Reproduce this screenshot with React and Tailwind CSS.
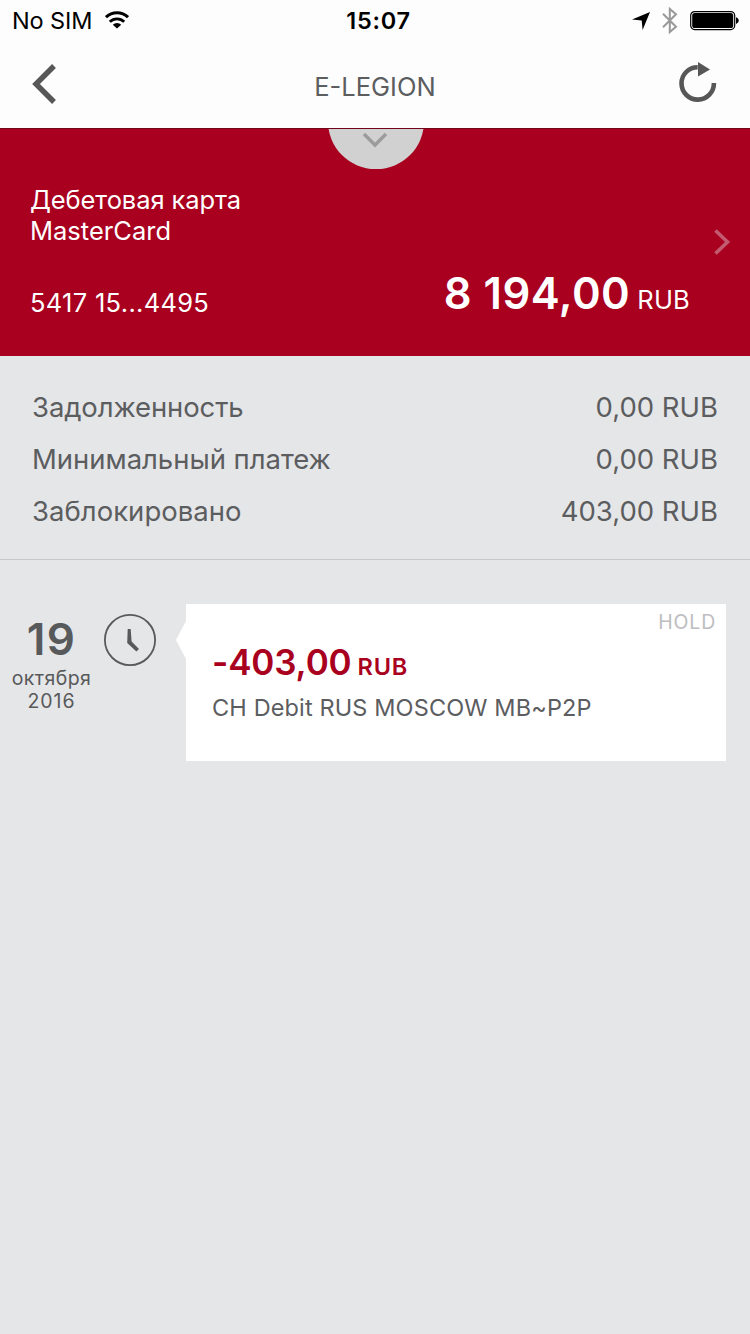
const DETAILS = [
  { label: "Задолженность", value: "0,00 RUB", spacing: "tracking-[-0.11px]" },
  { label: "Минимальный платеж", value: "0,00 RUB", spacing: "tracking-[-0.03px]" },
  { label: "Заблокировано", value: "403,00 RUB", spacing: "tracking-[0.03px]" },
];

const TRANSACTIONS = [
  {
    day: "19",
    month: "октября",
    year: "2016",
    amount: "-403,00",
    currency: "RUB",
    desc: "CH Debit RUS MOSCOW MB~P2P",
    status: "HOLD",
  },
];

function StatusBar() {
  return (
    <div className="grid h-10 grid-cols-3 items-center pl-3 pr-[11px] text-[23.5px] leading-[38px] text-black">
      <div className="flex items-center gap-[13px]">
        <span className="pt-[2px] tracking-[-0.1px]">No SIM</span>
        <svg width="24" height="18" viewBox="0 0 24 18" fill="none" stroke="#000">
          <path d="M1 6.2a15.6 15.6 0 0 1 22 0" strokeWidth="3" />
          <path d="M4.8 10.8a10.2 10.2 0 0 1 14.4 0" strokeWidth="2.8" />
          <path d="M12 17.6 7.8 13.8a5.7 5.7 0 0 1 8.4 0z" fill="#000" stroke="none" />
        </svg>
      </div>
      <span className="pl-[6px] pt-[2px] text-center font-semibold tracking-[0.7px]">15:07</span>
      <div className="flex items-center justify-end pt-[2px]">
        <svg width="18" height="18" viewBox="0 0 18 18" className="mr-[12px]">
          <path d="M18 0 10.6 18 9.7 8.4 0 7.6z" fill="#000" />
        </svg>
        <svg width="16" height="28" viewBox="0 0 16 28" className="mr-[12px]" fill="none" stroke="#999" strokeWidth="2">
          <path d="M1 6.700 14 19.800 7.800 25.100V1.900L14 7.200 1 20.300" />
        </svg>
        <svg width="49" height="20" viewBox="0 0 49 20">
          <rect x="0.7" y="0.6" width="44" height="18" rx="4" fill="none" stroke="#000" strokeWidth="1.2" />
          <rect x="2.2" y="2.1" width="41" height="15" rx="2.6" fill="#000" />
          <path d="M46 6.300c1.600.400 2.700 1.700 2.700 3.300S47.600 12.500 46 12.900z" fill="#000" />
        </svg>
      </div>
    </div>
  );
}

function Header() {
  return (
    <div className="grid h-[88px] grid-cols-[1fr_auto_1fr] items-center pl-[33px] pr-[33px]">
      <svg width="26" height="40" viewBox="0 0 26 40" className="-ml-px" fill="none" stroke="#575757" strokeWidth="5.4">
        <path d="M22 2 4 20l18 18" />
      </svg>
      <h1 className="pt-[5px] text-[25.5px] leading-[31px] text-[#5c5d5f]">E-LEGION</h1>
      <svg width="38" height="40" viewBox="0 0 38 40" className="mb-1 justify-self-end">
        <path d="M18.7 5.2A16.2 16.2 0 1 0 34.9 21" fill="none" stroke="#575757" strokeWidth="4.6" />
        <path d="M19 0v14.5L31 7.4z" fill="#575757" />
      </svg>
    </div>
  );
}

function AccountCard() {
  return (
    <div className="relative h-[228px] overflow-hidden border-t border-[#72051b] bg-[#a90020] pl-[30px] pr-[60px] pt-[55px] text-[25.5px] leading-[31px] text-white">
      {/* Pull-down tab */}
      <div className="absolute -top-[55px] left-[328px] flex h-[95px] w-[96px] justify-center rounded-full bg-[#d1d1d1]">
        <svg width="26" height="16" viewBox="0 0 26 16" className="mr-[2px] mt-[58px]" fill="none" stroke="#9c9c9c" strokeWidth="3.4">
          <path d="M2 2l11 11L24 2" />
        </svg>
      </div>

      <p className="tracking-[-0.1px]">Дебетовая карта</p>
      <p>MasterCard</p>
      <div className="mt-6 flex h-12 justify-between">
        <span className="self-end tracking-[0.3px]">5417 15...4495</span>
        <p className="flex items-baseline pt-px">
          <span className="text-[43.5px] font-semibold leading-[44px] tracking-[0.5px]">8 194,00</span>
          <span className="ml-[7px] leading-none tracking-[0.2px]">RUB</span>
        </p>
      </div>

      <svg width="18" height="28" viewBox="0 0 18 28" className="absolute right-[19px] top-[99px]" fill="none" stroke="#c35b70" strokeWidth="3.6">
        <path d="M2.5 2.5 14.5 14 2.5 25.5" />
      </svg>
    </div>
  );
}

function Transaction({ item }) {
  return (
    <div className="flex">
      <div className="flex w-[103px] flex-col items-center pt-[13px] text-[#58595b]">
        <span className="text-[44px] font-semibold leading-[44px] tracking-[1.5px]">{item.day}</span>
        <span className="mt-[6px] text-[19.5px] leading-[23px] tracking-[0.45px]">{item.month}</span>
        <span className="text-[19.5px] leading-[23px] tracking-[0.9px]">{item.year}</span>
      </div>
      <svg width="54" height="54" viewBox="0 0 54 54" className="mt-[9px]">
        <circle cx="27" cy="27" r="25.1" fill="none" stroke="#58595b" strokeWidth="1.8" />
        <path d="M24.7 16.1h3l.9 12.400 7.400 7.500-2.600 2.500-9.200-8.500z" fill="#58595b" />
      </svg>
      <svg width="10" height="38" viewBox="0 0 10 38" className="ml-[19px] mt-[17px]">
        <path d="M10 0 0 19l10 19z" fill="#fff" />
      </svg>
      <div className="relative h-[157px] w-[540px] bg-white pl-[26px] pt-9">
        <span className="absolute right-[10px] top-[6px] text-[19.5px] leading-6 tracking-[0.8px] text-[#bdbdbf]">{item.status}</span>
        <p className="flex h-[44px] items-baseline font-semibold text-[#a90020]">
          <span className="text-[35px] leading-[44px] tracking-[-0.15px]">{item.amount}</span>
          <span className="ml-[6px] text-[23.5px] leading-none tracking-[0.8px]">{item.currency}</span>
        </p>
        <p className="mt-[9px] text-[23.5px] leading-[30px] tracking-[0.13px] text-[#5c5d5f]">{item.desc}</p>
      </div>
    </div>
  );
}

export default function App() {
  return (
    <div className="h-[1334px] w-[750px] overflow-hidden bg-[#e5e6e8] font-['Inter','Liberation_Sans',sans-serif]">
      <div className="bg-[#fdfdfd]">
        <StatusBar />
        <Header />
      </div>
      <AccountCard />

      <div className="border-b border-[#c6c7c9] px-8 pb-[22px] pt-[25px]">
        {DETAILS.map((row) => (
          <div key={row.label} className="flex justify-between text-[27.5px] leading-[52px] text-[#5c5d5f]">
            <span className={row.spacing}>{row.label}</span>
            <span>{row.value}</span>
          </div>
        ))}
      </div>

      <div className="pt-11">
        {TRANSACTIONS.map((item) => (
          <Transaction key={item.desc} item={item} />
        ))}
      </div>
    </div>
  );
}
